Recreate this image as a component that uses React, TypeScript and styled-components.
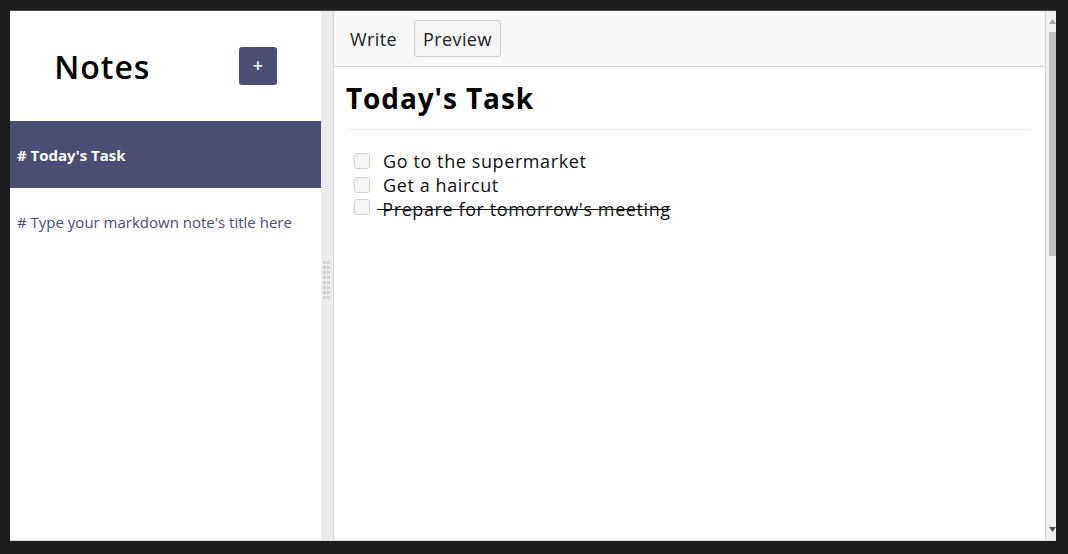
import React from "react";
import styled, { createGlobalStyle } from "styled-components";

const Global = createGlobalStyle`
  html, body { margin: 0; padding: 0; background: #1e1e1e; }
  body { font-family: "Open Sans", "Liberation Sans", sans-serif; }
  * { box-sizing: border-box; }
`;

const Frame = styled.div`
  margin: 10px 12px 0 10px;
  height: 531px;
  display: flex;
  background: #fff;
  border-top: 1px solid #4a4a4a;
  border-bottom: 1px solid #dcdcdc;
`;

const Sidebar = styled.aside`
  width: 311px;
  flex: none;
  display: flex;
  flex-direction: column;
  background: #fff;
`;

const SideHeader = styled.header`
  height: 110px;
  display: flex;
  align-items: center;
  justify-content: space-around;
`;

const Title = styled.h1`
  margin: 0;
  font-size: 32px;
  font-weight: 600;
  letter-spacing: 1px;
  color: #000;
`;

const AddButton = styled.button`
  width: 38px;
  height: 38px;
  border: none;
  border-radius: 3px;
  background: #4a4d74;
  color: #fff;
  font-family: inherit;
  font-size: 18px;
  font-weight: 600;
  display: flex;
  align-items: center;
  justify-content: center;
  padding: 0 0 2px;
`;

const NoteItem = styled.div<{ $active?: boolean }>`
  height: 67px;
  display: flex;
  align-items: center;
  padding-left: 7px;
  font-size: 15px;
  font-weight: ${(p) => (p.$active ? 700 : 400)};
  background: ${(p) => (p.$active ? "#4a4d74" : "transparent")};
  color: ${(p) => (p.$active ? "#fff" : "#4b4e6b")};
`;

const Gutter = styled.div`
  width: 13px;
  flex: none;
  background: #ececec;
  border-right: 1px solid #d4d4d4;
  display: flex;
  align-items: center;
  justify-content: center;
  padding: 10px 1px 0 0;
`;

const Main = styled.main`
  flex: 1;
  display: flex;
  flex-direction: column;
  min-width: 0;
  border-right: 1px solid #d6d6d6;
`;

const Toolbar = styled.div`
  height: 56px;
  flex: none;
  display: flex;
  align-items: center;
  gap: 8px;
  padding-left: 7px;
  background: #f7f7f7;
  border-bottom: 1px solid #d6d6de;
`;

const Tab = styled.button<{ $selected?: boolean }>`
  height: 37px;
  padding: 0 8px;
  font-family: inherit;
  font-size: 18px;
  letter-spacing: 0.4px;
  color: #222;
  border-radius: 3px;
  border: 1px solid ${(p) => (p.$selected ? "#d0d0d0" : "transparent")};
  background: ${(p) => (p.$selected ? "#f5f5f5" : "transparent")};
`;

const Preview = styled.div`
  flex: 1;
  padding: 12px 14px 0 12px;
`;

const Heading = styled.h1`
  margin: 0;
  padding-bottom: 12px;
  font-size: 28px;
  line-height: 38px;
  font-weight: 700;
  letter-spacing: 0.9px;
  color: #000;
  border-bottom: 1px solid #e8e8e8;
`;

const TaskList = styled.ul`
  list-style: none;
  margin: 19px 0 0;
  padding: 0 0 0 8px;
`;

const Task = styled.li`
  display: flex;
  align-items: center;
  height: 24px;
  font-size: 18px;
  letter-spacing: 0.6px;
  color: #111;
`;

const Check = styled.span<{ $raised?: boolean }>`
  width: 16px;
  height: 16px;
  flex: none;
  border: 1px solid #cfcfcf;
  border-radius: 3px;
  background: #f5f5f5;
  margin-right: 13px;
  position: relative;
  top: ${(p) => (p.$raised ? "-2px" : "0")};
`;

const Struck = styled.span`
  text-decoration: line-through;
  margin-left: -6px;
`;

const ScrollTrack = styled.div`
  width: 10px;
  flex: none;
  background: #f0f0f0;
  display: flex;
  flex-direction: column;
  align-items: flex-end;
`;

const Arrow = styled.div`
  height: 21px;
  width: 100%;
  display: flex;
  align-items: center;
  justify-content: flex-end;
`;

const Thumb = styled.div`
  width: 7px;
  height: 224px;
  background: #c1c1c1;
`;

const Spacer = styled.div`
  flex: 1;
`;

const Grip = () => (
  <svg width="7" height="39" viewBox="0 0 7 39">
    {Array.from({ length: 8 }).map((_, r) =>
      [0, 4].map((c) => (
        <rect key={`${r}-${c}`} x={c} y={r * 5} width="3" height="3" fill="#d2d2d2" />
      ))
    )}
  </svg>
);

const TriUp = () => (
  <svg width="7" height="5" viewBox="0 0 7 5">
    <path d="M0 5 L3.5 0 L7 5 Z" fill="#a3a3a3" />
  </svg>
);
const TriDown = () => (
  <svg width="7" height="5" viewBox="0 0 7 5">
    <path d="M0 0 L7 0 L3.5 5 Z" fill="#505050" />
  </svg>
);

export default function App() {
  return (
    <>
      <Global />
      <Frame>
        <Sidebar>
          <SideHeader>
            <Title>Notes</Title>
            <AddButton>+</AddButton>
          </SideHeader>
          <NoteItem $active># Today's Task</NoteItem>
          <NoteItem># Type your markdown note's title here</NoteItem>
        </Sidebar>
        <Gutter>
          <Grip />
        </Gutter>
        <Main>
          <Toolbar>
            <Tab>Write</Tab>
            <Tab $selected>Preview</Tab>
          </Toolbar>
          <Preview>
            <Heading>Today's Task</Heading>
            <TaskList>
              <Task>
                <Check />
                Go to the supermarket
              </Task>
              <Task>
                <Check />
                Get a haircut
              </Task>
              <Task>
                <Check $raised />
                <Struck>{"\u00a0Prepare for tomorrow's meeting"}</Struck>
              </Task>
            </TaskList>
          </Preview>
        </Main>
        <ScrollTrack>
          <Arrow>
            <TriUp />
          </Arrow>
          <Thumb />
          <Spacer />
          <Arrow>
            <TriDown />
          </Arrow>
        </ScrollTrack>
      </Frame>
    </>
  );
}
